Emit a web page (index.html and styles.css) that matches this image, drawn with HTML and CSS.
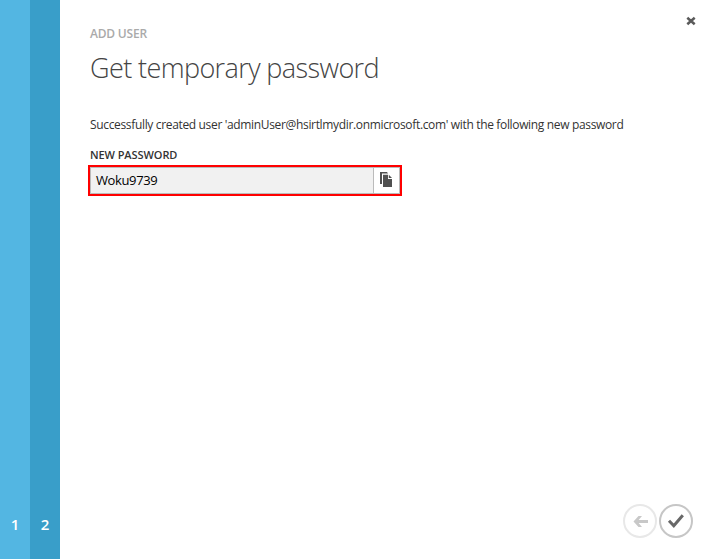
FILE: index.html
```html
<!DOCTYPE html>
<html lang="en">
<head>
<meta charset="utf-8">
<title>Add user</title>
<link rel="stylesheet" href="styles.css">
</head>
<body>
<div class="wizard">
  <nav class="steps">
    <div class="step">1</div>
    <div class="step step-current">2</div>
  </nav>
  <main class="content">
    <button class="close" aria-label="Close"><svg width="10" height="10" viewBox="0 0 10 10"><path d="M1.3 1.7 8.7 8.3M8.7 1.7 1.3 8.3" stroke="#5a5a5a" stroke-width="2.5"/></svg></button>
    <div class="eyebrow">ADD USER</div>
    <h1>Get temporary password</h1>
    <p class="message">Successfully created user 'adminUser@hsirtlmydir.onmicrosoft.com' with the following new password</p>
    <div class="label">NEW PASSWORD</div>
    <div class="field">
      <div class="value">Woku9739</div>
      <button class="copy" aria-label="Copy"><svg width="12" height="15" viewBox="0 0 12 15"><path d="M0 0h7l1 1.5H2V12H0z" fill="#505050"/><path d="M3 2.7h5V7h4v8H3z" fill="#505050"/><path d="M8.8 2.7 12 6H8.8z" fill="#505050"/></svg></button>
    </div>
    <footer class="actions">
      <button class="round" aria-label="Back"><svg width="34" height="34" viewBox="0 0 34 34"><circle cx="17" cy="17" r="16" fill="#fff" stroke="#e8e8e8" stroke-width="2"/><path d="M25 17.5H12.5" fill="none" stroke="#c8c8c8" stroke-width="3"/><path d="M15.5 12H19l-4.6 5.5L19 23h-3.5L10.5 17.5z" fill="#c8c8c8"/></svg></button>
      <button class="round" aria-label="Complete"><svg width="34" height="34" viewBox="0 0 34 34"><circle cx="17" cy="17" r="16" fill="#fff" stroke="#c6c6c6" stroke-width="2"/><path d="M10 16.8l4.8 5 9-10.5" fill="none" stroke="#686868" stroke-width="3"/></svg></button>
    </footer>
  </main>
</div>
</body>
</html>
```
FILE: styles.css
```css
* { box-sizing: border-box; }
body { margin: 0; font-family: "Open Sans", "Noto Sans", sans-serif; color: #333; background: #fff; }
button { border: 0; padding: 0; background: none; display: block; }
svg { display: block; }
.wizard { display: flex; width: 709px; height: 559px; }
.steps { display: flex; }
.step { width: 30px; display: flex; align-items: flex-end; justify-content: center; padding-bottom: 25px; background: #53b6e2; color: #fff; font-size: 15px; line-height: 20px; font-weight: 600; }
.step-current { background: #399ec9; }
.content { position: relative; flex: 1; display: flex; flex-direction: column; padding: 24px 16px 21px 30px; }
.close { position: absolute; right: 13px; top: 16px; }
.eyebrow { font-size: 12px; line-height: 20px; font-weight: 600; color: #aaa; letter-spacing: -0.2px; }
h1 { margin: 4px 0 0; font-size: 27px; line-height: 40px; font-weight: 300; color: #444; letter-spacing: -0.6px; white-space: nowrap; }
.message { margin: 27px 0 0; font-size: 12px; line-height: 20px; letter-spacing: -0.34px; white-space: nowrap; }
.label { margin-top: 10px; font-size: 11px; line-height: 20px; font-weight: 600; letter-spacing: -0.08px; }
.field { display: flex; width: 314px; height: 31px; margin-left: -2px; border: 2px solid #f00; }
.value { flex: 1; background: #f1f1f1; padding-left: 5px; font-size: 13px; line-height: 25px; letter-spacing: -0.38px; color: #000; border: 1px solid #bbb; }
.copy { display: flex; align-items: flex-start; width: 26px; padding: 4px 0 0 6px; border: 1px solid #bbb; border-left: 0; }
.actions { margin-top: auto; display: flex; justify-content: flex-end; gap: 2px; }
```
